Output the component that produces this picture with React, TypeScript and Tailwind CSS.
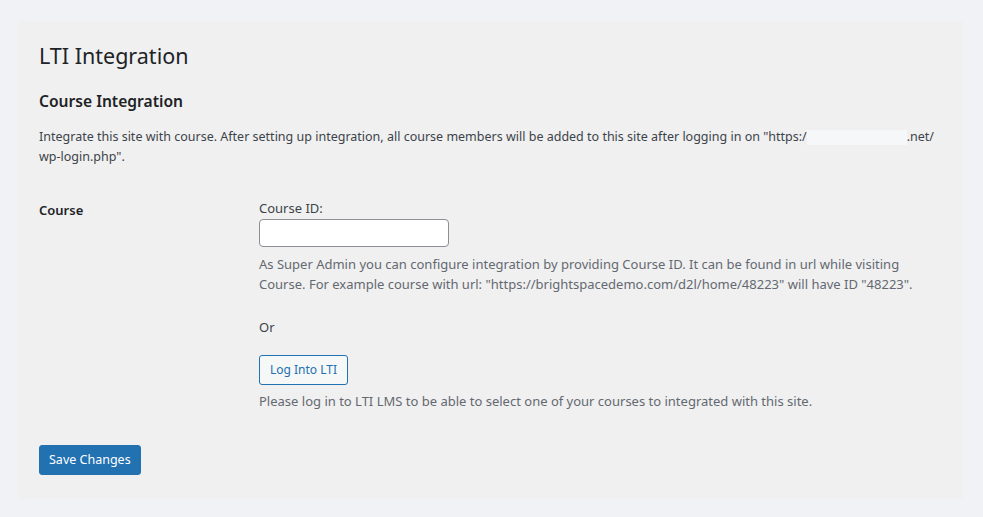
import React from 'react'

const font = { fontFamily: '"Noto Sans", "Open Sans", sans-serif' }

export default function App() {
  return (
    <div className="min-h-[517px] bg-[#f1f2f5] pt-[21px] pl-[18px] pr-[20px] text-[#3c434a]" style={font}>
      <div className="bg-[#f0f0f0] pl-[21px] pr-[21px] pt-[20px] pb-[24px]">
        <h1 className="text-[21.5px] leading-[30px] font-normal text-[#1d2327]">LTI Integration</h1>

        <h2 className="mt-[18px] text-[15.6px] leading-[24px] font-semibold text-[#1d2327]">Course Integration</h2>

        <p className="mt-[14px] text-[12.5px] leading-[20px]">
          Integrate this site with course. After setting up integration, all course members will be added to this site after logging in on "https:/
          <span className="inline-block w-[100px] h-[15px] align-middle bg-[#f6f7f9]" />
          .net/ wp-login.php".
        </p>

        <div className="mt-[31px] flex">
          <div className="w-[220px] shrink-0 pt-[2px] text-[13px] leading-[20px] font-semibold text-[#1d2327]">Course</div>
          <div className="flex-1 text-[13px] leading-[20px]">
            <label className="block">Course ID:</label>
            <input
              type="text"
              className="mt-[1px] block w-[190px] h-[28px] rounded-[4px] border border-[#8c8f94] bg-white px-2"
            />
            <p className="mt-[7px] text-[#646970]">
              As Super Admin you can configure integration by providing Course ID. It can be found in url while visiting
              Course. For example course with url: "https://brightspacedemo.com/d2l/home/48223" will have ID "48223".
            </p>
            <p className="mt-[23px]">Or</p>
            <button
              type="button"
              className="mt-[18px] h-[30px] rounded-[3px] border border-[#2271b1] bg-[#f6f7f7] px-[10px] text-[12px] text-[#2271b1]"
            >
              Log Into LTI
            </button>
            <p className="mt-[6px] text-[#646970]">
              Please log in to LTI LMS to be able to select one of your courses to integrated with this site.
            </p>
          </div>
        </div>

        <button
          type="button"
          className="mt-[34px] h-[30px] rounded-[3px] border border-[#2271b1] bg-[#2271b1] px-[9px] text-[12.5px] text-white"
        >
          Save Changes
        </button>
      </div>
    </div>
  )
}
